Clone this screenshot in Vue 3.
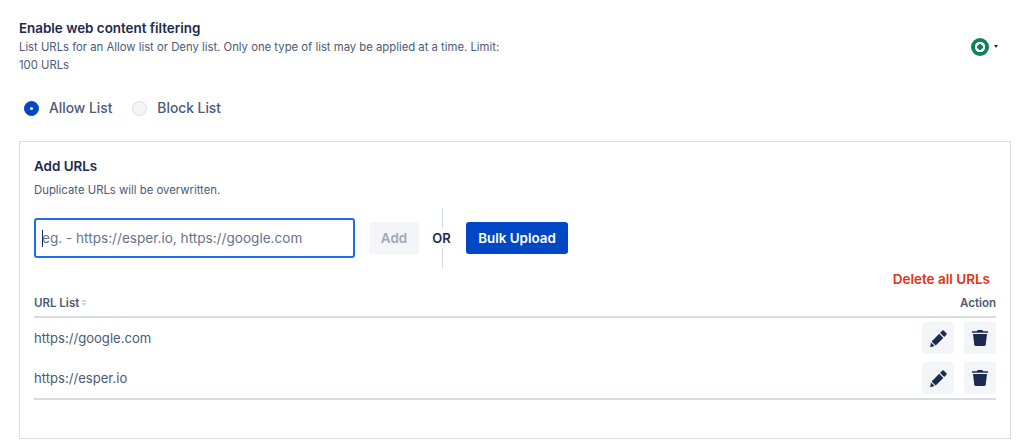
<script setup>
const urls = ['https://google.com', 'https://esper.io']
</script>

<template>
  <div class="page">
    <header class="head">
      <div class="head-text">
        <h1 class="title">Enable web content filtering</h1>
        <p class="desc">List URLs for an Allow list or Deny list. Only one type of list may be applied at a time. Limit: 100 URLs</p>
      </div>
      <div class="status">
        <span class="ring"></span>
        <span class="caret"></span>
      </div>
    </header>

    <div class="radios">
      <label class="radio"><span class="dot on"></span>Allow List</label>
      <label class="radio"><span class="dot"></span>Block List</label>
    </div>

    <section class="card">
      <h2 class="card-title">Add URLs</h2>
      <p class="card-sub">Duplicate URLs will be overwritten.</p>

      <div class="add-row">
        <div class="input"><span class="cursor"></span>eg. - https://esper.io, https://google.com</div>
        <button class="btn add">Add</button>
        <div class="or"><span class="or-text">OR</span></div>
        <button class="btn bulk">Bulk Upload</button>
      </div>

      <div class="delete-row"><a class="delete">Delete all URLs</a></div>

      <div class="thead">
        <span class="th">URL List
          <svg class="sort" width="6" height="7" viewBox="0 0 6 7"><path d="M3 0 6 3H0zM0 4h6L3 7z" fill="#d3d7de"/></svg>
        </span>
        <span class="th">Action</span>
      </div>
      <div class="tbody">
        <div v-for="u in urls" :key="u" class="row">
          <span class="url">{{ u }}</span>
          <div class="actions">
            <button class="icon-btn">
              <svg width="17" height="17" viewBox="0 0 17 17"><path fill="#1b2a4e" d="M12.3.6a1 1 0 0 1 1.4 0l2.7 2.7a1 1 0 0 1 0 1.4L14.2 7 10.1 2.9zM9.2 3.8l4.1 4.1-7.6 7.6-4.1-4.1zM1 12.4l3.7 3.7-3.6.8H.2z"/></svg>
            </button>
            <button class="icon-btn">
              <svg width="16" height="16" viewBox="0 0 16 16"><path fill="#1b2a4e" d="M5.5 0h5l.6 1.2H16v1.6H0V1.2h4.9zM1 4h14l-1.3 10.8c-.1.7-.6 1.2-1.3 1.2H3.6c-.7 0-1.2-.5-1.3-1.2z"/></svg>
            </button>
          </div>
        </div>
      </div>
    </section>
  </div>
</template>

<style>
body { background: #fff; }
</style>

<style scoped>
.page {
  width: 1026px;
  height: 446px;
  box-sizing: border-box;
  padding: 19px 15px 0 19px;
  font-family: Inter, "Liberation Sans", sans-serif;
  color: #1b2a4e;
  overflow: hidden;
}
.head { display: flex; justify-content: space-between; align-items: center; padding-right: 13px; }
.head-text { width: 490px; }
.title { margin: 0; font-size: 13.4px; line-height: 18px; font-weight: 600; }
.desc { margin: 1px 0 0; font-size: 11.3px; line-height: 18px; color: #4b5a75; }
.status { display: flex; align-items: center; gap: 5px; }
.ring { width: 18px; height: 18px; box-sizing: border-box; border-radius: 50%; background: radial-gradient(circle, #0b8457 0 2.6px, #fff 3px 5px, #0b8457 5.4px); }
.caret { width: 0; height: 0; border-left: 2.5px solid transparent; border-right: 2.5px solid transparent; border-top: 3px solid #1b2a4e; }
.radios { display: flex; gap: 20px; margin-top: 23px; padding-left: 5px; height: 22px; align-items: center; }
.radio { display: flex; align-items: center; gap: 10px; font-size: 13.8px; font-weight: 500; color: #4b5a75; }
.dot { width: 15px; height: 15px; box-sizing: border-box; border-radius: 50%; background: #f4f5f8; border: 1px solid #d9dce3; position: relative; }
.dot.on { background: #0047c5; border-color: #0047c5; }
.dot.on::after { content: ""; position: absolute; left: 5px; top: 5px; width: 3px; height: 3px; border-radius: 50%; background: #fff; }
.card { margin-top: 22px; height: 298px; box-sizing: border-box; border: 1px solid #dadde2; padding: 15px 14px 0; }
.card-title { margin: 0; font-size: 13.4px; line-height: 18px; font-weight: 600; }
.card-sub { margin: 7px 0 0; font-size: 11.35px; line-height: 16px; color: #4b5a75; }
.add-row { display: flex; align-items: center; margin-top: 10px; height: 60px; }
.input { width: 321px; height: 40px; box-sizing: border-box; border: 2px solid #1a6fe8; border-radius: 3px; font-size: 13.6px; line-height: 36px; padding-left: 6px; color: #67738a; position: relative; white-space: nowrap; }
.cursor { position: absolute; left: 6px; top: 10px; width: 1px; height: 17px; background: #1b2a4e; }
.btn { border: 0; border-radius: 3px; height: 32px; font-family: inherit; font-size: 13.4px; font-weight: 600; padding: 0; }
.add { width: 50px; margin-left: 14px; background: #f4f5f8; color: #a1a8b5; }
.or { width: 47px; height: 60px; position: relative; display: flex; align-items: center; justify-content: center; }
.or::before { content: ""; position: absolute; left: 23px; top: 0; bottom: 0; width: 1px; background: #d3d7de; }
.or-text { position: relative; left: -1px; background: #fff; padding: 3px 0; font-size: 13px; font-weight: 600; line-height: 14px; }
.bulk { width: 102px; background: #0047c5; color: #fff; }
.delete-row { display: flex; justify-content: flex-end; margin-top: 2px; padding-right: 6px; line-height: 18px; }
.delete { color: #e0330f; font-size: 13.5px; font-weight: 600; }
.thead { display: flex; justify-content: space-between; align-items: center; height: 27px; border-bottom: 2px solid #d8dce0; box-sizing: content-box; padding-top: 1px; font-size: 11.5px; }
.th { font-weight: 600; color: #4b5a75; display: flex; align-items: center; gap: 2px; }
.tbody { border-bottom: 2px solid #d8dce0; }
.row { display: flex; justify-content: space-between; align-items: center; height: 40px; }
.url { font-size: 13.1px; color: #4b5a75; }
.actions { display: flex; gap: 10px; }
.icon-btn { width: 32px; height: 32px; border: 0; border-radius: 3px; background: #f4f5f8; padding: 0; display: flex; align-items: center; justify-content: center; }
</style>
